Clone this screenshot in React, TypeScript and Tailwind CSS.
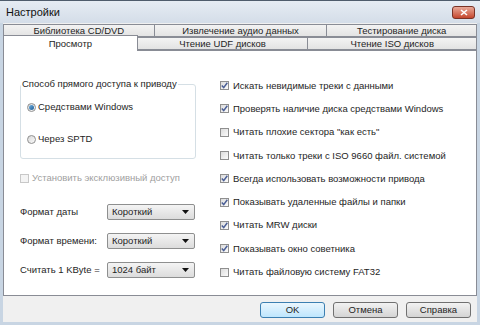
import React from "react";

const font = { fontFamily: '"Liberation Sans", Arial, sans-serif' };

function Check({ checked = false, disabled = false }: { checked?: boolean; disabled?: boolean }) {
  return (
    <span
      className={
        "flex h-[9px] w-[9px] shrink-0 items-center justify-center border " +
        (disabled
          ? "border-[#c8c8c8] bg-[#f4f4f4]"
          : "border-[#8f8f8f] bg-gradient-to-br from-[#dcdcdc] to-[#fbfbfb]")
      }
    >
      {checked && (
        <svg width="7" height="7" viewBox="0 0 7 7">
          <path d="M0.8 3.6 L2.7 5.6 L6.3 0.8" fill="none" stroke="#4b5f96" strokeWidth="1.5" />
        </svg>
      )}
    </span>
  );
}

function Radio({ checked = false }: { checked?: boolean }) {
  return (
    <span className="flex h-[9px] w-[9px] shrink-0 items-center justify-center rounded-full border border-[#8f8f8f] bg-gradient-to-br from-[#d8d8d8] to-[#fbfbfb]">
      {checked && <span className="h-[5px] w-[5px] rounded-full bg-gradient-to-br from-[#6fb0e0] to-[#1d5d95]" />}
    </span>
  );
}

function Select({ value }: { value: string }) {
  return (
    <div className="flex h-[16px] w-[88px] items-center justify-between rounded-[2px] border border-[#8e8f8f] bg-gradient-to-b from-[#f4f4f4] to-[#dcdcdc] pl-[4px] pr-[5px]">
      <span>{value}</span>
      <svg width="7" height="4" viewBox="0 0 7 4">
        <path d="M0 0 H7 L3.5 4 Z" fill="#111" />
      </svg>
    </div>
  );
}

function Tab({ label, w, active = false }: { label: string; w: string; active?: boolean }) {
  return (
    <div
      className={
        "flex items-center justify-center border border-[#898c95] " +
        w +
        (active
          ? " relative z-10 h-[16px] mb-[-1px] border-b-0 bg-white"
          : " h-full -ml-[1px] first:ml-0 bg-gradient-to-b from-[#f3f3f3] to-[#e3e3e3]")
      }
    >
      {label}
    </div>
  );
}

const leftRows = [
  { label: "Формат даты", value: "Короткий", mt: "mt-[20px]" },
  { label: "Формат времени:", value: "Короткий", mt: "mt-[13px]" },
  { label: "Считать 1 KByte =", value: "1024 байт", mt: "mt-[13px]" },
];

const options = [
  { label: "Искать невидимые треки с данными", checked: true },
  { label: "Проверять наличие диска средствами Windows", checked: true },
  { label: "Читать плохие сектора \"как есть\"", checked: false },
  { label: "Читать только треки с ISO 9660 файл. системой", checked: false },
  { label: "Всегда использовать возможности привода", checked: true },
  { label: "Показывать удаленные файлы и папки", checked: true },
  { label: "Читать MRW диски", checked: true },
  { label: "Показывать окно советника", checked: true },
  { label: "Читать файловую систему FAT32", checked: false },
];

export default function App() {
  return (
    <div
      className="flex h-[325px] w-[480px] flex-col overflow-hidden border-t border-[#4f5c6c] bg-[#c8d5e3] text-[9.5px] leading-[12px] text-[#1e1e1e]"
      style={font}
    >
      {/* Title bar */}
      <div className="flex h-[22px] shrink-0 items-start justify-between bg-gradient-to-b from-[#e6ecf3] to-[#d4dde8] pl-[6px] pr-[5px]">
        <span className="mt-[5px] text-[11px] leading-[13px] text-[#111]">Настройки</span>
        <div className="mt-[5px] flex h-[13px] w-[23px] items-center justify-center rounded-[3px] border border-[#7a3326] bg-gradient-to-b from-[#e8a898] to-[#c4452c]">
          <svg width="8" height="7" viewBox="0 0 8 7">
            <path d="M1 1 L7 6 M7 1 L1 6" stroke="#fff" strokeWidth="1.6" />
          </svg>
        </div>
      </div>

      {/* Client area */}
      <div className="mx-[3px] flex flex-1 flex-col bg-[#f0f0f0]">
        {/* Tabs */}
        <div className="flex h-[14px] pt-[1px]">
          <Tab label="Библиотека CD/DVD" w="w-[152px]" />
          <Tab label="Извлечение аудио данных" w="w-[174px]" />
          <Tab label="Тестирование диска" w="w-[151px]" />
        </div>
        <div className="flex h-[13px] items-end">
          <Tab label="Просмотр" w="w-[135px]" active />
          <Tab label="Чтение UDF дисков" w="w-[172px] -ml-[1px]" />
          <Tab label="Чтение ISO дисков" w="w-[170px]" />
        </div>

        {/* Panel */}
        <div className="flex h-[246px] border border-[#898c95] bg-white pl-[16px]">
          <div className="flex w-[176px] flex-col">
            <fieldset className="mt-[27px] h-[81px] rounded-[3px] border border-[#d5dfe5]">
              <legend className="px-[1px]">Способ прямого доступа к приводу</legend>
              <div className="ml-[6px] mt-[11px] flex items-center gap-[2px]">
                <Radio checked />
                <span>Средствами Windows</span>
              </div>
              <div className="ml-[6px] mt-[20px] flex items-center gap-[2px]">
                <Radio />
                <span>Через SPTD</span>
              </div>
            </fieldset>
            <div className="mt-[13px] flex items-center gap-[3px] text-[#a0a0a0]">
              <Check disabled />
              <span>Установить эксклюзивный доступ</span>
            </div>
            {leftRows.map((r) => (
              <div key={r.label} className={"flex items-center " + r.mt}>
                <span className="w-[87px]">{r.label}</span>
                <Select value={r.value} />
              </div>
            ))}
          </div>

          <div className="ml-[24px] flex flex-col pt-[23px]">
            {options.map((o) => (
              <div key={o.label} className="flex h-[23.3px] items-center gap-[4px]">
                <Check checked={o.checked} />
                <span>{o.label}</span>
              </div>
            ))}
          </div>
        </div>

        {/* Buttons */}
        <div className="flex flex-1 items-start justify-end gap-[8px] pr-[6px] pt-[6px]">
          <button className="h-[16px] w-[65px] rounded-[3px] border border-[#3c7fb1] bg-gradient-to-b from-[#eaf6fd] to-[#bee6fd] text-[9.5px] leading-[12px]">
            OK
          </button>
          <button className="h-[16px] w-[65px] rounded-[3px] border border-[#707070] bg-gradient-to-b from-[#f2f2f2] to-[#d4d4d4] text-[9.5px] leading-[12px]">
            Отмена
          </button>
          <button className="h-[16px] w-[65px] rounded-[3px] border border-[#707070] bg-gradient-to-b from-[#f2f2f2] to-[#d4d4d4] text-[9.5px] leading-[12px]">
            Справка
          </button>
        </div>
      </div>
      <div className="h-[3px] shrink-0" />
    </div>
  );
}
